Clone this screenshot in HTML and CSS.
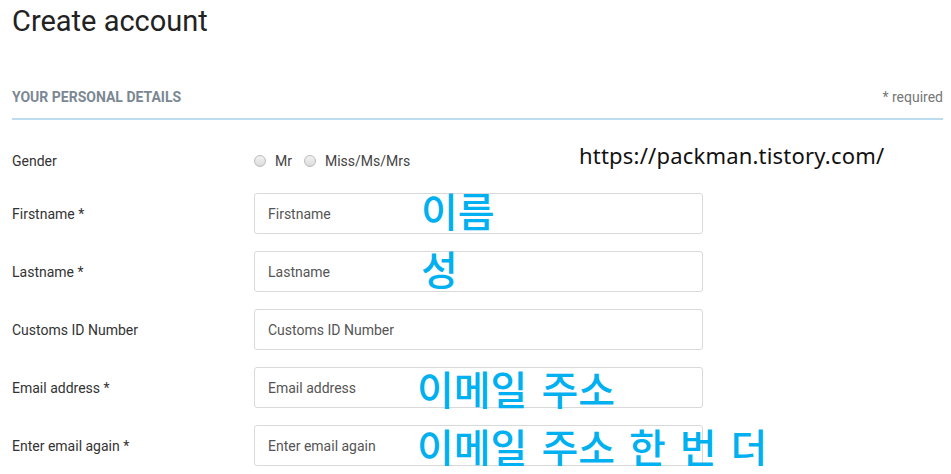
FILE: index.html
```html
<!DOCTYPE html>
<html lang="en">
<head>
  <meta charset="UTF-8">
  <title>Create account</title>
  <link rel="stylesheet" href="styles.css">
</head>
<body>
  <main class="page">
    <h1>Create account</h1>

    <div class="section-head">
      <h2>Your personal details</h2>
      <span class="required-note">* required</span>
    </div>

    <form class="account-form">
      <div class="form-row gender-row">
        <label>Gender</label>
        <div class="radios">
          <label class="radio"><input type="radio" name="gender"> Mr</label>
          <label class="radio"><input type="radio" name="gender"> Miss/Ms/Mrs</label>
        </div>
      </div>
      <div class="form-row">
        <label for="firstname">Firstname *</label>
        <input id="firstname" type="text" placeholder="Firstname">
      </div>
      <div class="form-row">
        <label for="lastname">Lastname *</label>
        <input id="lastname" type="text" placeholder="Lastname">
      </div>
      <div class="form-row">
        <label for="customs">Customs ID Number</label>
        <input id="customs" type="text" placeholder="Customs ID Number">
      </div>
      <div class="form-row">
        <label for="email">Email address *</label>
        <input id="email" type="text" placeholder="Email address">
      </div>
      <div class="form-row">
        <label for="email2">Enter email again *</label>
        <input id="email2" type="text" placeholder="Enter email again">
      </div>
    </form>

    <!-- annotations drawn over the screenshot -->
    <span class="note url-note">https://packman.tistory.com/</span>
    <span class="note ko note-first">이름</span>
    <span class="note ko note-last">성</span>
    <span class="note ko note-email">이메일 주소</span>
    <span class="note ko note-email2">이메일 주소 한 번 더</span>
  </main>
</body>
</html>
```

FILE: styles.css
```css
body {
  margin: 0;
  font-family: Roboto, 'Liberation Sans', sans-serif;
  color: #333;
  background: #fff;
}

.page {
  position: relative;
  padding: 0 8px 0 12px;
}

h1 {
  margin: 0;
  padding-top: 2px;
  font-size: 29px;
  font-weight: 400;
  line-height: 38px;
  color: #222;
}

.section-head {
  display: flex;
  justify-content: space-between;
  align-items: center;
  margin-top: 47px;
  padding-bottom: 11px;
  border-bottom: 2px solid #bcdcf0;
}

.section-head h2 {
  margin: 0;
  font-size: 14px;
  font-weight: 700;
  text-transform: uppercase;
  color: #7b8894;
  line-height: 20px;
}

.required-note {
  font-size: 14px;
  color: #777;
  line-height: 20px;
}

.account-form {
  padding-top: 31px;
}

.form-row {
  display: grid;
  grid-template-columns: 242px 449px;
  align-items: center;
  height: 41px;
  margin-bottom: 17px;
  font-size: 14px;
}

.form-row:last-child {
  margin-bottom: 0;
}

.gender-row {
  height: 20px;
  margin-bottom: 22px;
}

.radios {
  display: flex;
  gap: 12px;
  color: #444;
}

.radio {
  display: flex;
  align-items: center;
  gap: 9px;
}

.radio input {
  appearance: none;
  margin: 0;
  width: 12px;
  height: 12px;
  border: 1px solid #bbb;
  border-radius: 50%;
  background: linear-gradient(#f2f2f2, #dcdcdc);
}

.form-row input[type="text"] {
  box-sizing: border-box;
  height: 41px;
  padding: 0 13px;
  border: 1px solid #d9d9d9;
  border-radius: 3px;
  font-family: inherit;
  font-size: 14px;
  color: #555;
}

.form-row input::placeholder {
  color: #555;
}

.note {
  position: absolute;
  white-space: nowrap;
}

.url-note {
  left: 579px;
  top: 140px;
  font-family: 'Noto Sans', sans-serif;
  font-size: 22px;
  letter-spacing: 0.2px;
  color: #111;
}

.ko {
  font-family: 'Noto Sans CJK KR', sans-serif;
  font-size: 40px;
  font-weight: 500;
  line-height: 40px;
  word-spacing: 5px;
  color: #00b0f0;
}

.note-first { left: 421px; top: 190px; }
.note-last { left: 421px; top: 248px; }
.note-email { left: 417px; top: 368px; }
.note-email2 { left: 417px; top: 426px; }
```
